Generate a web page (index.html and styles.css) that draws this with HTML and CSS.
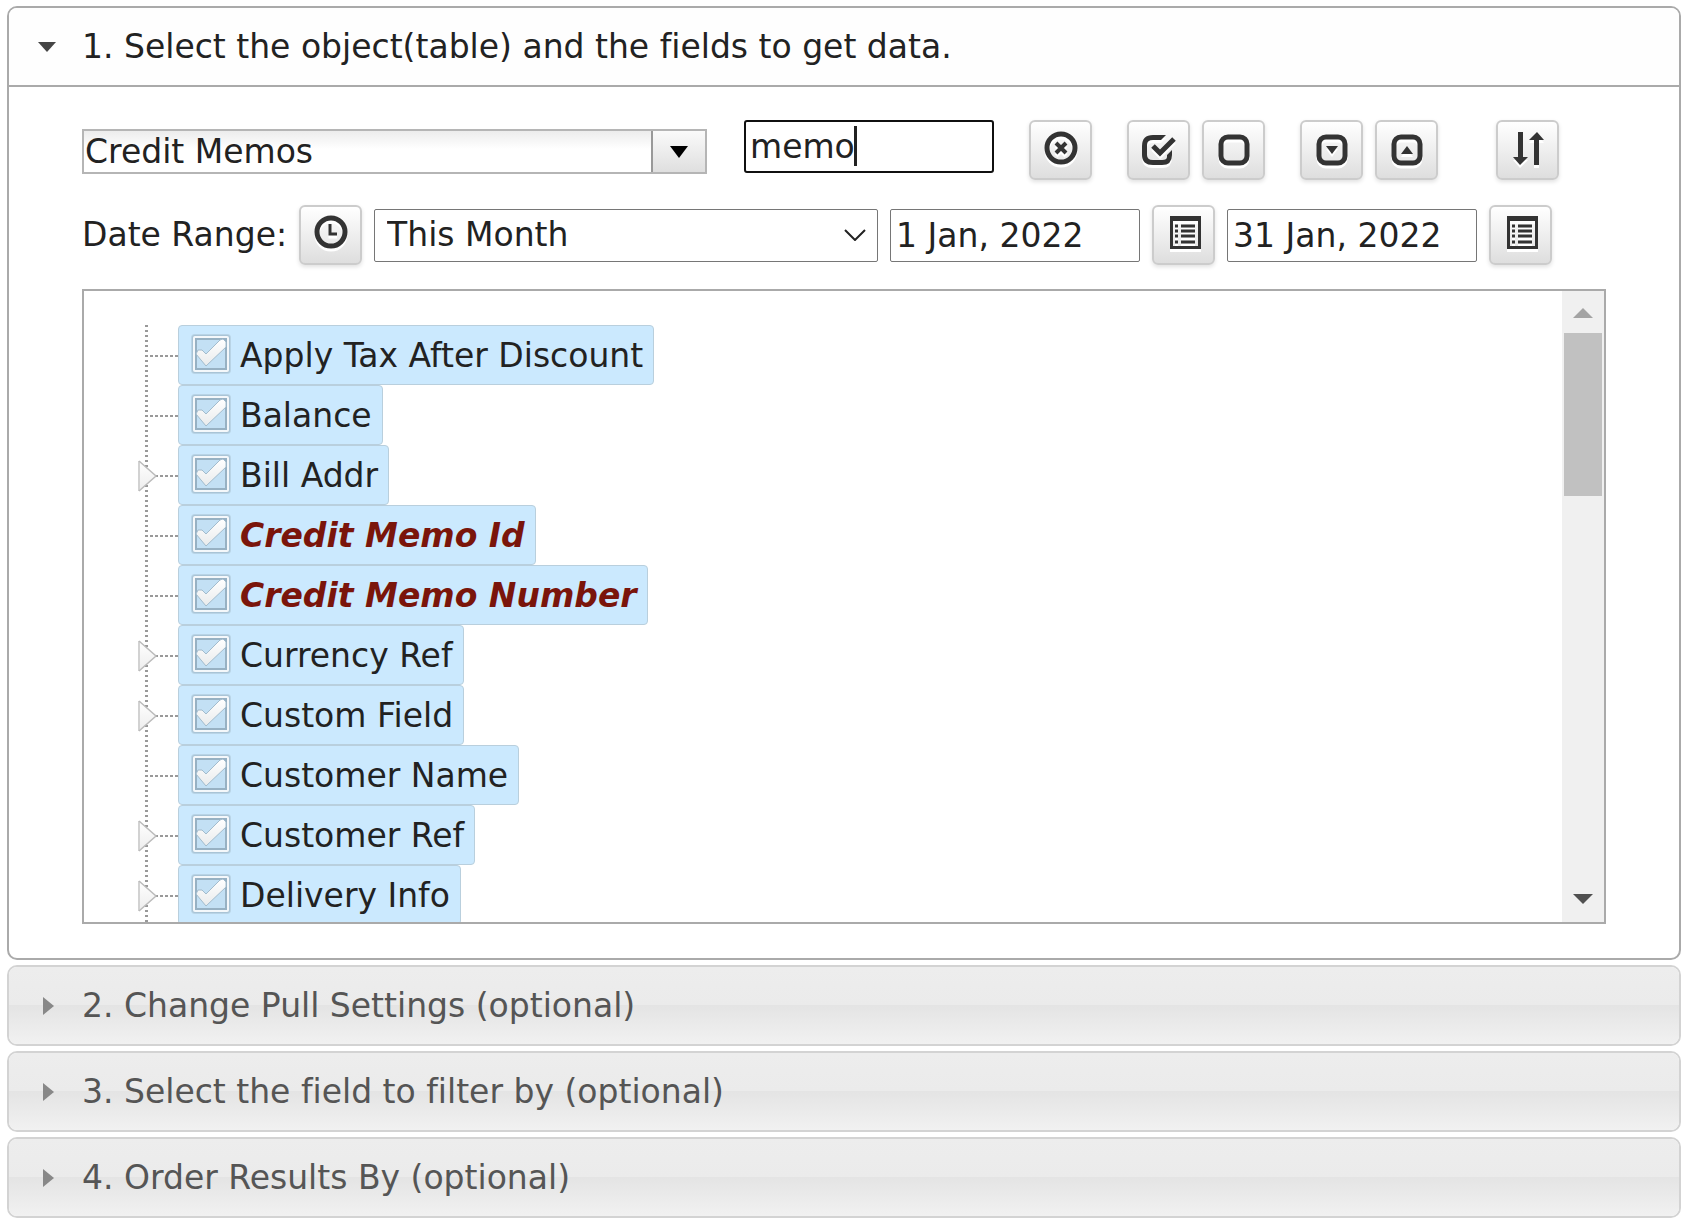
FILE: index.html
```html
<!DOCTYPE html>
<html lang="en">
<head>
    <meta charset="UTF-8">
    <meta name="viewport" content="width=device-width, initial-scale=1.0">
    <title>Get Data</title>
    <link rel="stylesheet" href="styles.css">
</head>
<body>
    <!-- Shared shapes for the tree and the date buttons -->
    <svg class="sprite" aria-hidden="true">
        <linearGradient id="tick-fill" x1="0" y1="0" x2="0" y2="1">
            <stop offset="0" stop-color="#fff"/>
            <stop offset="1" stop-color="#e9ebec"/>
        </linearGradient>
        <linearGradient id="expander-fill" x1="0" y1="0" x2="0" y2="1">
            <stop offset="0" stop-color="#fff"/>
            <stop offset="1" stop-color="#ededed"/>
        </linearGradient>
        <symbol id="tick" viewBox="0 0 40 40">
            <rect x="0" y="0" width="40" height="40" rx="4" fill="#b9d4e6"/>
            <rect x="1" y="1" width="38" height="38" rx="3" fill="#a9c4d6"/>
            <rect x="2" y="2" width="36" height="36" rx="2" fill="#f4f8fb"/>
            <rect x="4" y="4" width="32" height="32" fill="#97b1c3"/>
            <rect x="6" y="6" width="28" height="28" fill="#c3e0f4"/>
            <path d="M5 20 L7 16 L11 16 L15 20 L29 6 L32 5 L35 8 L35 13 L15 32 Z" fill="url(#tick-fill)" stroke="#a3bccd" stroke-width="1"/>
        </symbol>
        <symbol id="expander" viewBox="0 0 20 32">
            <path d="M1 1 L18 16 L1 31 Z" fill="url(#expander-fill)"/>
            <path d="M1 1 V31" stroke="#d2d2d2" stroke-width="2"/>
            <path d="M1 1 L18 16 L1 31" fill="none" stroke="#bbb" stroke-width="1.5"/>
        </symbol>
        <symbol id="calendar" viewBox="0 0 40 40">
            <path fill-rule="evenodd" d="M6 1 H37 V34 H6 Z M9 6 V31 H34 V6 Z"/>
            <path d="M17 11 H31 M17 16 H31 M17 21 H31 M17 27 H31 M11 11 H14 M11 16 H14 M11 21 H14 M11 27 H14" stroke="#333" stroke-width="3"/>
        </symbol>
    </svg>

    <div class="accordion">
        <!-- Step 1 -->
        <section class="step active">
            <h3><button type="button" class="step-header">
                <svg class="step-arrow" viewBox="0 0 18 18"><path d="M0 4 H18 L9 14 Z"/></svg>
                1. Select the object(table) and the fields to get data.
            </button></h3>
            <div class="step-body">
                <div class="toolbar">
                    <div class="combo">
                        <input type="text" class="combo-text" aria-label="Object" value="Credit Memos">
                        <button type="button" class="combo-trigger" aria-label="Show objects">
                            <svg width="18" height="12" viewBox="0 0 18 12"><path d="M0 0 H18 L9 12 Z"/></svg>
                        </button>
                    </div>
                    <div class="search">
                        <input type="text" class="text-box focused" aria-label="Find a field" value="memo">
                        <span class="caret"></span>
                    </div>
                    <button type="button" class="icon-btn" aria-label="Clear">
                        <svg viewBox="0 0 40 40"><circle cx="20" cy="18" r="14" class="line"/><path d="M15 13 L25 23 M25 13 L15 23" class="line mid"/></svg>
                    </button>
                    <div class="btn-group">
                        <button type="button" class="icon-btn" aria-label="Check all">
                            <svg viewBox="0 0 40 40"><path d="M27 5 H14 Q3 5 3 16 V25 Q3 35 14 35 H23 Q33 35 33 25 V20 L28 25 V27 Q28 30 23 30 H14 Q8 30 8 25 V15 Q8 10 14 10 H22 Z"/><path d="M14 16 L21 23 L35 9" class="line"/></svg>
                        </button>
                        <button type="button" class="icon-btn" aria-label="Uncheck all">
                            <svg viewBox="0 0 40 40"><rect x="7" y="7" width="26" height="26" rx="7" class="line"/></svg>
                        </button>
                    </div>
                    <div class="btn-group">
                        <button type="button" class="icon-btn" aria-label="Expand all">
                            <svg viewBox="0 0 40 40"><rect x="7" y="7" width="26" height="26" rx="7" class="line"/><path d="M14 16 H26 L20 24 Z"/></svg>
                        </button>
                        <button type="button" class="icon-btn" aria-label="Collapse all">
                            <svg viewBox="0 0 40 40"><rect x="7" y="7" width="26" height="26" rx="7" class="line"/><path d="M14 24 H26 L20 16 Z"/></svg>
                        </button>
                    </div>
                    <button type="button" class="icon-btn sort-btn" aria-label="Sort">
                        <svg viewBox="0 0 40 40"><path d="M10 2 H15 V27 H20 L12 35 L5 27 H10 Z M26 35 H31 V10 H36 L29 2 L21 10 H26 Z"/></svg>
                    </button>
                </div>

                <div class="date-range">
                    <label for="range">Date Range:</label>
                    <button type="button" class="icon-btn" aria-label="Reset range">
                        <svg viewBox="0 0 40 40"><circle cx="20" cy="17" r="14" class="line"/><path d="M19 9 V19 H26" class="line thin"/></svg>
                    </button>
                    <div class="select-wrap">
                        <select id="range" class="text-box">
                            <option>This Month</option>
                        </select>
                        <svg class="chevron" width="22" height="12" viewBox="0 0 22 12"><path d="M1 1 L11 11 L21 1"/></svg>
                    </div>
                    <input type="text" class="text-box" aria-label="From" value="1 Jan, 2022">
                    <button type="button" class="icon-btn" aria-label="Pick start date">
                        <svg><use href="#calendar"/></svg>
                    </button>
                    <input type="text" class="text-box" aria-label="To" value="31 Jan, 2022">
                    <button type="button" class="icon-btn" aria-label="Pick end date">
                        <svg><use href="#calendar"/></svg>
                    </button>
                </div>

                <!-- Field tree -->
                <div class="field-box">
                    <ul class="tree">
                        <li><label class="node"><span class="check"><input type="checkbox" checked><svg><use href="#tick"/></svg></span>Apply Tax After Discount</label></li>
                        <li><label class="node"><span class="check"><input type="checkbox" checked><svg><use href="#tick"/></svg></span>Balance</label></li>
                        <li><svg class="expander"><use href="#expander"/></svg><label class="node"><span class="check"><input type="checkbox" checked><svg><use href="#tick"/></svg></span>Bill Addr</label></li>
                        <li><label class="node found"><span class="check"><input type="checkbox" checked><svg><use href="#tick"/></svg></span>Credit Memo Id</label></li>
                        <li><label class="node found"><span class="check"><input type="checkbox" checked><svg><use href="#tick"/></svg></span>Credit Memo Number</label></li>
                        <li><svg class="expander"><use href="#expander"/></svg><label class="node"><span class="check"><input type="checkbox" checked><svg><use href="#tick"/></svg></span>Currency Ref</label></li>
                        <li><svg class="expander"><use href="#expander"/></svg><label class="node"><span class="check"><input type="checkbox" checked><svg><use href="#tick"/></svg></span>Custom Field</label></li>
                        <li><label class="node"><span class="check"><input type="checkbox" checked><svg><use href="#tick"/></svg></span>Customer Name</label></li>
                        <li><svg class="expander"><use href="#expander"/></svg><label class="node"><span class="check"><input type="checkbox" checked><svg><use href="#tick"/></svg></span>Customer Ref</label></li>
                        <li><svg class="expander"><use href="#expander"/></svg><label class="node"><span class="check"><input type="checkbox" checked><svg><use href="#tick"/></svg></span>Delivery Info</label></li>
                    </ul>
                    <div class="scrollbar">
                        <svg class="scroll-up" width="20" height="10" viewBox="0 0 20 10"><path d="M0 10 H20 L10 0 Z"/></svg>
                        <div class="scroll-thumb"></div>
                        <svg class="scroll-down" width="20" height="10" viewBox="0 0 20 10"><path d="M0 0 H20 L10 10 Z"/></svg>
                    </div>
                </div>
            </div>
        </section>

        <!-- Steps 2-4, collapsed -->
        <section class="step">
            <h3><button type="button" class="step-header">
                <svg class="step-arrow" viewBox="0 0 18 18"><path d="M5 0 V18 L16 9 Z"/></svg>
                2. Change Pull Settings (optional)
            </button></h3>
        </section>
        <section class="step">
            <h3><button type="button" class="step-header">
                <svg class="step-arrow" viewBox="0 0 18 18"><path d="M5 0 V18 L16 9 Z"/></svg>
                3. Select the field to filter by (optional)
            </button></h3>
        </section>
        <section class="step">
            <h3><button type="button" class="step-header">
                <svg class="step-arrow" viewBox="0 0 18 18"><path d="M5 0 V18 L16 9 Z"/></svg>
                4. Order Results By (optional)
            </button></h3>
        </section>
    </div>
</body>
</html>
```
FILE: styles.css
```css
* {
    box-sizing: border-box;
}

body {
    margin: 6px 11px 0 7px;
    background-color: #fff;
    color: #222;
    font-family: Verdana, "DejaVu Sans", sans-serif;
    font-size: 33px;
    font-variant-ligatures: none;
    line-height: 40px;
}

button, input, select {
    margin: 0;
    font: inherit;
    color: inherit;
}

button {
    cursor: pointer;
}

.sprite {
    position: absolute;
    width: 0;
    height: 0;
}

/* Accordion */
.accordion {
    display: flex;
    flex-direction: column;
    gap: 5px;
}

.step {
    border: 2px solid #d3d3d3;
    border-radius: 10px;
    overflow: hidden;
}

.step.active {
    border-color: #aaa;
}

.step h3 {
    margin: 0;
    font-size: 33px;
    font-weight: normal;
}

.step-header {
    display: flex;
    align-items: center;
    gap: 26px;
    width: 100%;
    padding: 19px 29px 18px;
    border: none;
    background: linear-gradient(#ededed, #ebebeb 49%, #e4e4e4 50%, #f1f1f1);
    color: #555;
    text-align: left;
}

.step.active .step-header {
    border-bottom: 2px solid #aaa;
    background: #fefefe;
    color: #222;
}

.step-arrow {
    flex: none;
    width: 18px;
    height: 18px;
    fill: #888;
}

.step.active .step-arrow {
    fill: #454545;
}

.step-body {
    padding: 33px 73px 34px;
}

/* First row: object, search and tree buttons */
.toolbar {
    display: flex;
    align-items: flex-start;
    gap: 35px;
    margin-bottom: 25px;
}

.combo {
    display: flex;
    flex: 0 1 625px;
    min-width: 0;
    height: 45px;
    margin: 9px 2px 0 0;
    border: 2px solid #b5b5b5;
}

.combo-text {
    flex: 1;
    min-width: 0;
    padding: 0 1px;
    border: none;
    background: linear-gradient(#ececec, #fff 18px);
    outline: none;
}

.combo-trigger {
    display: flex;
    align-items: center;
    justify-content: center;
    width: 54px;
    padding: 0;
    border: none;
    border-left: 2px solid #999;
    background: linear-gradient(#fafafa, #dfdfdf);
}

.search {
    position: relative;
    flex: none;
}

.text-box {
    width: 250px;
    height: 53px;
    padding: 0 5px;
    border: 1px solid #767676;
    border-radius: 2px;
    background-color: #fff;
    outline: none;
}

.text-box.focused {
    display: block;
    padding: 0 4px;
    border: 2px solid #101010;
    border-radius: 3px;
}

.caret {
    position: absolute;
    top: 6px;
    left: 110px;
    width: 3px;
    height: 40px;
    background-color: #222;
}

.btn-group {
    display: flex;
    gap: 12px;
}

.icon-btn {
    display: flex;
    flex: none;
    align-items: center;
    justify-content: center;
    width: 63px;
    height: 60px;
    padding: 0;
    border: 2px solid #ccc;
    border-radius: 6px;
    background: linear-gradient(#fff, #dedede);
    box-shadow: 0 2px 4px rgba(0, 0, 0, 0.12);
}

.icon-btn svg {
    width: 40px;
    height: 40px;
    fill: #333;
    filter: drop-shadow(0 3px 0 #fff);
}

.icon-btn .line {
    fill: none;
    stroke: #333;
    stroke-width: 5;
}

.icon-btn .mid {
    stroke-width: 4;
}

.icon-btn .thin {
    stroke-width: 3;
}

.sort-btn {
    margin-left: 23px;
}

/* Second row: dates */
.date-range {
    display: flex;
    align-items: center;
    gap: 12px;
    margin-bottom: 24px;
}

.select-wrap {
    position: relative;
    flex: 0 1 504px;
}

.select-wrap select {
    display: block;
    width: 100%;
    padding: 0 12px;
    appearance: none;
}

.chevron {
    position: absolute;
    top: 20px;
    right: 12px;
    fill: none;
    stroke: #222;
    stroke-width: 2;
    pointer-events: none;
}

/* Field tree with its scrollbar */
.field-box {
    display: flex;
    height: 635px;
    border: 2px solid #aaa;
    overflow: hidden;
}

.tree {
    flex: 1;
    margin: 0;
    padding: 34px 0 0 54px;
    list-style: none;
}

.tree li {
    position: relative;
    height: 60px;
    padding-left: 40px;
    background:
        repeating-linear-gradient(#999 0 2px, transparent 2px 5px) 7px 0 / 3px 60px no-repeat,
        repeating-linear-gradient(90deg, #999 0 3px, transparent 3px 5px) 12px 30px / 28px 2px no-repeat;
}

.expander {
    position: absolute;
    top: 15px;
    left: 0;
    width: 20px;
    height: 32px;
}

.node {
    display: inline-flex;
    align-items: center;
    gap: 9px;
    height: 60px;
    padding: 2px 10px 0 12px;
    border: 1px solid #b9cfdd;
    border-radius: 4px;
    background-color: #cbe9fe;
}

.node.found {
    color: #7a150b;
    font-style: italic;
    font-weight: bold;
}

.check {
    display: grid;
    margin-bottom: 4px;
}

.check input, .check svg {
    grid-area: 1 / 1;
    width: 40px;
    height: 40px;
}

.check input {
    appearance: none;
}

.check svg {
    pointer-events: none;
}

.scrollbar {
    display: flex;
    flex-direction: column;
    align-items: center;
    width: 42px;
    padding: 17px 2px 18px;
    background-color: #f0f0f0;
}

.scroll-thumb {
    width: 100%;
    height: 163px;
    margin: 15px 0 auto;
    background-color: #c1c1c1;
}

.scroll-up {
    fill: #a3a3a3;
}

.scroll-down {
    fill: #505050;
}
```
